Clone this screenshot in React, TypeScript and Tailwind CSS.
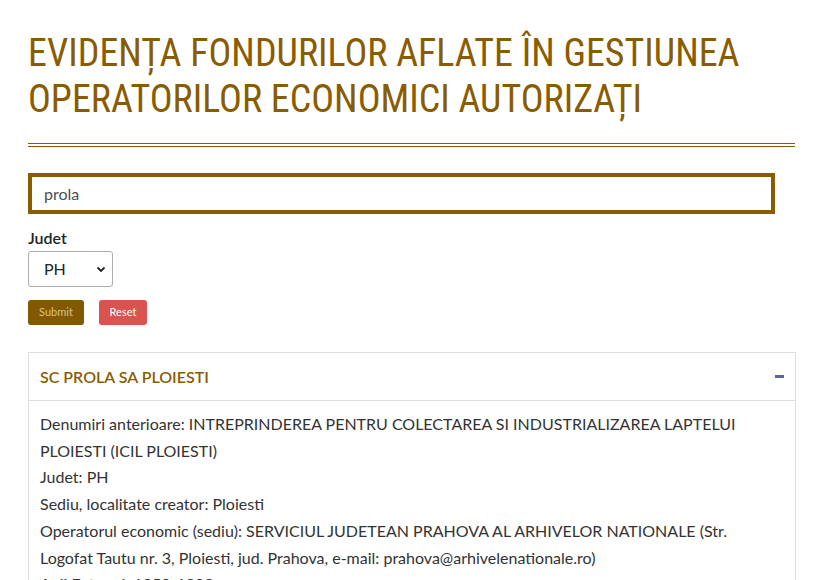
import React from "react";

export default function App() {
  const body = "font-['Source_Sans_Pro','Lato','Noto_Sans',sans-serif]";
  return (
    <div className={`bg-white min-h-[580px] ${body}`}>
      <div className="pl-[28px] pr-[32px] pt-[30px]">
        <h1 className="font-['Roboto_Condensed','Liberation_Sans_Narrow','Roboto',sans-serif] [font-stretch:condensed] text-[#8a5c00] text-[38px] leading-[46px] font-normal whitespace-nowrap">
          EVIDENȚA FONDURILOR AFLATE ÎN GESTIUNEA
          <br />
          OPERATORILOR ECONOMICI AUTORIZAȚI
        </h1>
        <div className="mt-[21px] border-t border-b border-[#8a5c00] h-[4px]" />
        <div className="mt-[26px] w-[747px] h-[41px] border-[4px] border-[#8a5c00] flex items-center pl-[12px] text-[16px] text-[#495057]">
          prola
        </div>
        <div className="mt-[12px] text-[16px] font-semibold text-[#212529] leading-[24px]">Judet</div>
        <div className="mt-[1px] w-[85px] h-[36px] border border-[#adadad] rounded-[3px] flex items-center justify-between pl-[15px] pr-[6px] text-[16px] text-[#212529]">
          <span>PH</span>
          <svg width="10" height="10" viewBox="0 0 10 10"><path d="M1.5 3.5 L5 7 L8.5 3.5" stroke="#222" strokeWidth="1.8" fill="none" /></svg>
        </div>
        <div className="mt-[13px] flex gap-[15px]">
          <div className="w-[56px] h-[25px] rounded-[3px] bg-[#825900] text-[#dcc48f] text-[11px] flex items-center justify-center">Submit</div>
          <div className="w-[48px] h-[25px] rounded-[3px] bg-[#d9534f] text-white text-[11px] flex items-center justify-center">Reset</div>
        </div>
        <div className="mt-[27px] border border-[#dedede] w-[768px]">
          <div className="h-[48px] border-b border-[#dedede] flex items-center justify-between pl-[11px] pr-[11px]">
            <span className="text-[#8a5c00] font-semibold text-[16px]">SC PROLA SA PLOIESTI</span>
            <span className="w-[9px] h-[3px] bg-[#6063a3]" />
          </div>
          <div className="pl-[11px] pr-[45px] pt-[10px] text-[16px] leading-[26.7px] text-[#333]">
            <div>Denumiri anterioare: INTREPRINDEREA PENTRU COLECTAREA SI INDUSTRIALIZAREA LAPTELUI PLOIESTI (ICIL PLOIESTI)</div>
            <div>Judet: PH</div>
            <div>Sediu, localitate creator: Ploiesti</div>
            <div>Operatorul economic (sediu): SERVICIUL JUDETEAN PRAHOVA AL ARHIVELOR NATIONALE (Str. Logofat Tautu nr. 3, Ploiesti, jud. Prahova, e-mail: prahova@arhivelenationale.ro)</div>
            <div>Anii Extremi: 1950-1999</div>
          </div>
        </div>
      </div>
    </div>
  );
}
